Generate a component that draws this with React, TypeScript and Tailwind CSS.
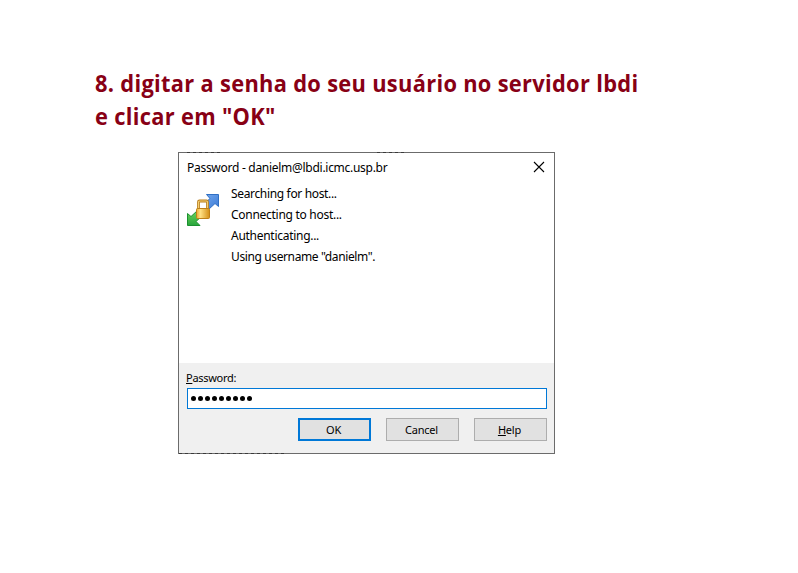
import type { ReactNode } from "react";

const sans = "font-['Noto_Sans','Open_Sans',sans-serif]";

function ConnectionIcon() {
  return (
    <svg width="34" height="34" viewBox="0 0 34 34" className="block">
      <defs>
        <linearGradient id="blue" x1="0" y1="0" x2="1" y2="1">
          <stop offset="0" stopColor="#75a9ee" />
          <stop offset="1" stopColor="#3979d5" />
        </linearGradient>
        <linearGradient id="green" x1="0" y1="0" x2="0" y2="1">
          <stop offset="0" stopColor="#72d85c" />
          <stop offset="1" stopColor="#28a53c" />
        </linearGradient>
        <linearGradient id="gold" x1="0" y1="0" x2="1" y2="0">
          <stop offset="0" stopColor="#e9a92c" />
          <stop offset=".3" stopColor="#ffe083" />
          <stop offset="1" stopColor="#d48f16" />
        </linearGradient>
      </defs>
      <path d="M20.5 1.5H32.5V13.5L29 10.5L22 17L17 12L24 5.5Z" fill="url(#blue)" stroke="#2f6fc4" />
      <path d="M1.5 20.5L5 23.5L12 17L17 22L10 28.5L14 32.5H1.5Z" fill="url(#green)" stroke="#1c9030" />
      <path d="M12.5 17V9Q12.5 8 13.5 8H20.5Q21.5 8 21.5 9V17" fill="#fff" stroke="#b87c1c" strokeWidth="2.8" strokeLinejoin="round" />
      <path d="M12.5 17V9Q12.5 8 13.5 8H20.5Q21.5 8 21.5 9V17" fill="none" stroke="#f4cf70" strokeWidth="1.2" />
      <rect x="10.5" y="15.5" width="13" height="10" rx="1" fill="url(#gold)" stroke="#be8018" />
    </svg>
  );
}

function DialogButton({ children, primary = false }: { children: ReactNode; primary?: boolean }) {
  return (
    <button
      className={`flex h-[23px] w-[73px] items-center justify-center bg-[#e1e1e1] pr-0.5 text-[11px] leading-[14px] tracking-[-0.2px] ${
        primary ? "border-2 border-[#0078d7]" : "border border-[#adadad]"
      }`}
    >
      <span>{children}</span>
    </button>
  );
}

const edgeMarks = "absolute h-px bg-[repeating-linear-gradient(90deg,#3a3a3a_0_3px,#6b6b6b_3px_6px)]";

export default function App() {
  return (
    <main className={`h-[573px] w-[798px] overflow-hidden bg-white text-black ${sans}`}>
      <h1 className="ml-[95px] w-[640px] origin-left scale-x-[0.91] pt-[66px] font-['Open_Sans','Noto_Sans',sans-serif] text-[24px] leading-[33px] font-bold tracking-[0.34px] whitespace-nowrap text-[#880015]">
        <span className="block">8. digitar a senha do seu usuário no servidor lbdi</span>
        <span className="block">e clicar em "OK"</span>
      </h1>
      <section className="relative mt-[20px] ml-[178px] flex h-[302px] w-[377px] flex-col border border-[#6b6b6b] bg-white">
        <i className={`${edgeMarks} -top-px left-2 w-9`} />
        <i className={`${edgeMarks} -top-px left-[198px] w-7`} />
        <i className={`${edgeMarks} -bottom-px left-0 w-[106px]`} />
        <header className="flex h-[30px] items-center justify-between pr-[9px] pl-2">
          <span className="text-[12px] leading-4 tracking-[-0.28px]">Password - danielm@lbdi.icmc.usp.br</span>
          <svg width="12" height="12" viewBox="0 0 12 12" className="-mt-0.5">
            <path d="M1 1L11 11M11 1L1 11" stroke="#000" strokeWidth="1.1" />
          </svg>
        </header>
        <div className="flex h-[180px] pl-[7px]">
          <div className="w-[45px] pt-[10px]"><ConnectionIcon /></div>
          <div className="text-[12px] leading-[21px] tracking-[-0.34px]">
            <p>Searching for host...</p>
            <p className="tracking-[-0.28px]">Connecting to host...</p>
            <p className="tracking-[-0.28px]">Authenticating...</p>
            <p className="tracking-[-0.38px]">Using username "danielm".</p>
          </div>
        </div>
        <div className="flex-1 bg-[#f0f0f0] px-2 pt-2">
          <p className="-ml-px text-[11px] leading-[14px] tracking-[-0.28px]"><u>P</u>assword:</p>
          <div className="mt-[3px] flex h-[21px] w-[360px] items-center gap-[2px] border border-[#0078d7] bg-white pl-[3px]">
            {Array.from({ length: 9 }, (_, i) => (
              <i key={i} className="block h-[5.5px] w-[5px] rounded-full bg-black" />
            ))}
          </div>
          <div className="mt-[9px] flex w-[360px] justify-end gap-[15px]">
            <DialogButton primary>OK</DialogButton>
            <DialogButton>Cancel</DialogButton>
            <DialogButton><u>H</u>elp</DialogButton>
          </div>
        </div>
      </section>
    </main>
  );
}
